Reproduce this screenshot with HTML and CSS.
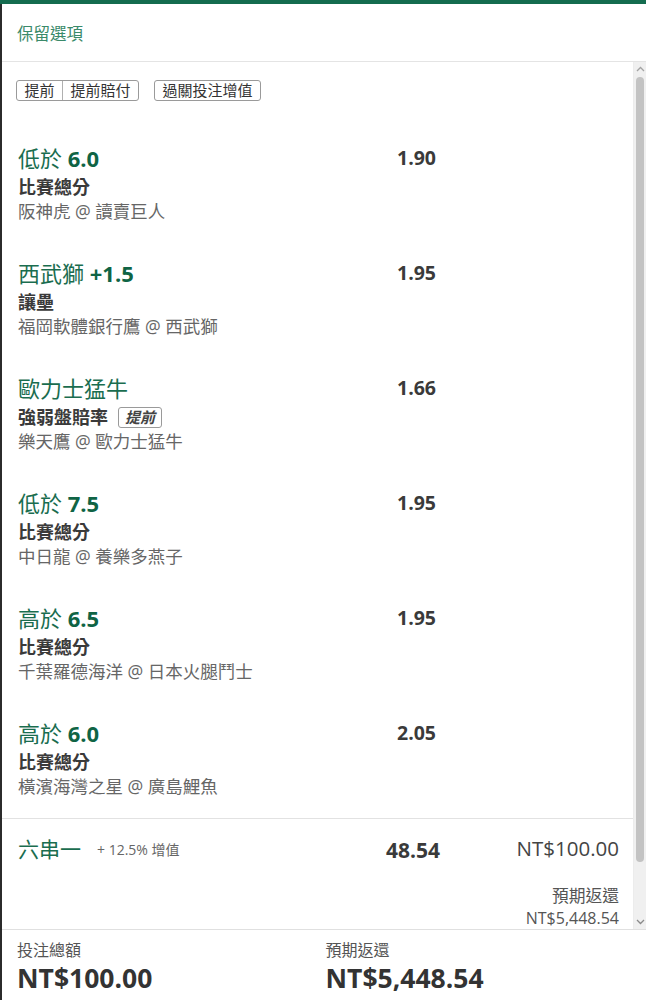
FILE: index.html
```html
<!DOCTYPE html>
<html lang="zh-Hant">
<head>
<meta charset="utf-8">
<title>保留選項</title>
<link rel="stylesheet" href="styles.css">
</head>
<body>
<div class="topbar"></div>
<div class="panel">
  <div class="header">保留選項</div>
  <div class="scroll">
    <div class="content">
      <div class="tags">
        <div class="tag-group"><span class="tag">提前</span><span class="tag">提前賠付</span></div>
        <div class="tag-group"><span class="tag">過關投注增值</span></div>
      </div>
      <div class="list">
        <div class="sel">
          <div class="info">
            <div class="title">低於 <b>6.0</b></div>
            <div class="market">比賽總分</div>
            <div class="teams">阪神虎 @ 讀賣巨人</div>
          </div>
          <div class="odds">1.90</div>
        </div>
        <div class="sel">
          <div class="info">
            <div class="title">西武獅 <b>+1.5</b></div>
            <div class="market">讓壘</div>
            <div class="teams">福岡軟體銀行鷹 @ 西武獅</div>
          </div>
          <div class="odds">1.95</div>
        </div>
        <div class="sel">
          <div class="info">
            <div class="title">歐力士猛牛</div>
            <div class="market">強弱盤賠率 <span class="badge">提前</span></div>
            <div class="teams">樂天鷹 @ 歐力士猛牛</div>
          </div>
          <div class="odds">1.66</div>
        </div>
        <div class="sel">
          <div class="info">
            <div class="title">低於 <b>7.5</b></div>
            <div class="market">比賽總分</div>
            <div class="teams">中日龍 @ 養樂多燕子</div>
          </div>
          <div class="odds">1.95</div>
        </div>
        <div class="sel">
          <div class="info">
            <div class="title">高於 <b>6.5</b></div>
            <div class="market">比賽總分</div>
            <div class="teams">千葉羅德海洋 @ 日本火腿鬥士</div>
          </div>
          <div class="odds">1.95</div>
        </div>
        <div class="sel">
          <div class="info">
            <div class="title">高於 <b>6.0</b></div>
            <div class="market">比賽總分</div>
            <div class="teams">橫濱海灣之星 @ 廣島鯉魚</div>
          </div>
          <div class="odds">2.05</div>
        </div>
      </div>
      <div class="parlay">
        <div class="parlay-row">
          <div class="parlay-name">六串一<span class="boost">+ 12.5% 增值</span></div>
          <div class="parlay-odds">48.54</div>
          <div class="parlay-stake">NT$100.00</div>
        </div>
        <div class="parlay-return">
          <div class="ret-label">預期返還</div>
          <div>NT$5,448.54</div>
        </div>
      </div>
    </div>
    <div class="scrollbar">
      <div class="sb-btn"><svg width="9" height="6" viewBox="0 0 9 6"><path d="M1 5 L4.5 1.5 L8 5" fill="none" stroke="#a3a3a3" stroke-width="1.3"/></svg></div>
      <div class="sb-track"><div class="sb-thumb"></div></div>
      <div class="sb-btn"><svg width="9" height="6" viewBox="0 0 9 6"><path d="M1 1 L4.5 4.5 L8 1" fill="none" stroke="#8a8a8a" stroke-width="1.3"/></svg></div>
    </div>
  </div>
  <div class="footer">
    <div class="fcol">
      <div class="flabel">投注總額</div>
      <div class="famount">NT$100.00</div>
    </div>
    <div class="fcol">
      <div class="flabel">預期返還</div>
      <div class="famount">NT$5,448.54</div>
    </div>
  </div>
</div>
</body>
</html>
```

FILE: styles.css
```css
* { box-sizing: border-box; }
html, body { margin: 0; padding: 0; }
body {
  width: 646px;
  height: 1000px;
  overflow: hidden;
  background: #fff;
  font-family: "Open Sans", "Noto Sans CJK TC", sans-serif;
  color: #333;
}
.topbar { height: 4px; background: #146c4f; }
.panel {
  border-left: 2px solid #2b2b2b;
  height: 996px;
  display: flex;
  flex-direction: column;
}
.header {
  height: 58px;
  border-bottom: 1px solid #e4e4e4;
  padding-left: 15px;
  display: flex;
  align-items: center;
  font-size: 16.5px;
  color: #3a8a6a;
  flex: none;
}
.scroll {
  height: 868px;
  flex: none;
  display: flex;
  border-bottom: 1px solid #e0e0e0;
}
.content {
  flex: 1;
  overflow: hidden;
  padding: 18px 16px 0 16px;
  border-right: 1px solid #ececec;
}
.tags { display: flex; gap: 15px; margin-left: -2px; }
.tag-group {
  display: flex;
  border: 1px solid #9a9a9a;
  border-radius: 3px;
  height: 21px;
}
.tag {
  font-size: 15px;
  line-height: 19px;
  padding: 0 7.5px;
  color: #333;
}
.tag + .tag { border-left: 1px solid #b0b0b0; }
.list {
  margin-top: 43px;
  padding-bottom: 23px;
  display: flex;
  flex-direction: column;
  gap: 39px;
}
.sel {
  display: grid;
  grid-template-columns: 1fr 90px 181px;
}
.title {
  font-size: 22px;
  line-height: 28px;
  color: #1a6d4f;
}
.title b { color: #0f6445; font-weight: 700; }
.market {
  font-size: 18px;
  line-height: 30px;
  font-weight: 700;
  color: #3a3a3a;
  display: flex;
  align-items: center;
  gap: 10px;
}
.badge {
  font-size: 15px;
  line-height: 19px;
  font-style: italic;
  font-weight: 700;
  color: #444;
  border: 1px solid #9a9a9a;
  border-radius: 3px;
  padding: 0 6px;
}
.teams {
  font-size: 17.5px;
  line-height: 18px;
  color: #666;
}
.odds {
  text-align: right;
  font-size: 19.5px;
  line-height: 28px;
  font-weight: 700;
  color: #3a3a3a;
}
.parlay {
  margin: 0 -16px;
  padding: 15px 14px 16px 16px;
  border-top: 1px solid #e2e2e2;
}
.parlay-row {
  display: grid;
  grid-template-columns: 1fr 90px 179px;
  line-height: 28px;
}
.parlay-name {
  font-size: 21px;
  color: #1a6d4f;
  display: flex;
  align-items: center;
}
.boost {
  font-size: 14px;
  color: #666;
  margin-left: 16px;
  padding-top: 2px;
}
.parlay-odds {
  text-align: right;
  font-size: 21px;
  font-weight: 700;
  color: #3a3a3a;
  padding-top: 2px;
}
.parlay-stake {
  text-align: right;
  font-size: 20.5px;
  color: #444;
}
.parlay-return {
  margin-top: 20px;
  text-align: right;
  font-size: 16px;
  line-height: 23px;
  color: #555;
}
.ret-label { font-size: 16.75px; }
.scrollbar {
  width: 12px;
  flex: none;
  background: #f0f0f0;
  display: flex;
  flex-direction: column;
}
.sb-btn {
  height: 14px;
  display: flex;
  align-items: center;
  justify-content: center;
  flex: none;
}
.sb-track {
  flex: 1;
  padding: 1px 2px 53px;
  display: flex;
}
.sb-thumb {
  flex: 1;
  background: #c3c3c3;
  border-radius: 4px;
}
.footer {
  display: grid;
  grid-template-columns: 1fr 1fr;
  column-gap: 4px;
  padding: 9px 16px 0 15px;
}
.flabel {
  font-size: 16px;
  line-height: 22px;
  color: #555;
}
.famount {
  font-size: 26.5px;
  line-height: 34px;
  font-weight: 700;
  color: #333;
}
```
